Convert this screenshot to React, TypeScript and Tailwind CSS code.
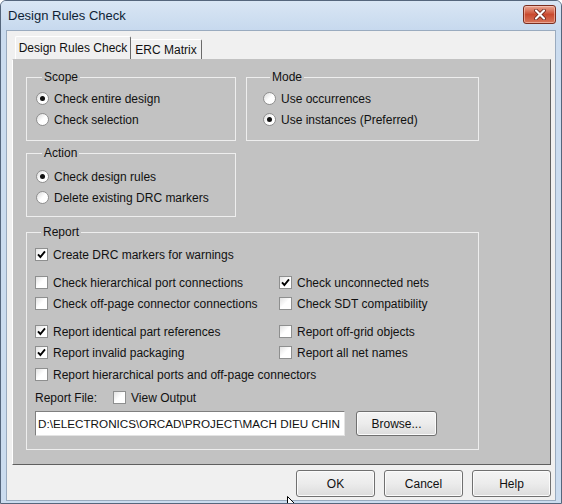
import React from "react";

const Radio = ({ checked }: { checked?: boolean }) => (
  <span className="w-[13px] h-[13px] rounded-full border border-[#8f8f8f] bg-gradient-to-br from-[#d9d9d9] via-white to-white flex items-center justify-center shrink-0">
    {checked && <span className="w-[5px] h-[5px] rounded-full bg-[#111]" />}
  </span>
);

const Check = ({ checked }: { checked?: boolean }) => (
  <span className="w-[13px] h-[13px] border border-[#8e8f8f] bg-gradient-to-br from-[#e2e2e2] via-white to-white flex items-center justify-center shrink-0">
    {checked && (
      <svg width="9" height="9" viewBox="0 0 9 9">
        <path d="M1 4.3 L3.4 7 L8 1.4" stroke="#000" strokeWidth="1.9" fill="none" />
      </svg>
    )}
  </span>
);

const RadioRow = ({ checked, label }: { checked?: boolean; label: string }) => (
  <div className="flex items-center h-[21px] gap-[5px] whitespace-nowrap">
    <Radio checked={checked} />
    <span>{label}</span>
  </div>
);

const CheckRow = ({ checked, label }: { checked?: boolean; label: string }) => (
  <div className="flex items-center h-[21px] gap-[5px] whitespace-nowrap">
    <Check checked={checked} />
    <span>{label}</span>
  </div>
);

const Btn = ({ children, className }: { children: React.ReactNode; className?: string }) => (
  <div
    className={
      "flex items-center justify-center rounded-[3px] border border-[#707070] bg-gradient-to-b from-[#f4f4f4] via-[#ececec] to-[#dcdcdc] shadow-[inset_0_0_0_1px_#fbfbfb] " +
      (className || "")
    }
  >
    {children}
  </div>
);

export default function App() {
  return (
    <div className="relative w-[562px] h-[504px] bg-[#cbdcef] border border-[#55667c] rounded-t-[6px] flex flex-col overflow-hidden font-['Liberation_Sans',Arial,sans-serif] text-[12px] text-[#111]">
      {/* Title bar */}
      <div className="h-[29px] shrink-0 flex justify-between pl-[7px] pr-[5px] bg-gradient-to-b from-[#d9e6f4] to-[#c7d9ee]">
        <span className="text-[13px] leading-[29px] text-[#0f1f36]">Design Rules Check</span>
        <div className="mt-[4px] w-[33px] h-[19px] rounded-[3px] border border-[#7a2e20] bg-gradient-to-b from-[#e9a895] via-[#c94a2f] to-[#d6745a] flex items-center justify-center shadow-[inset_0_0_0_1px_rgba(255,220,210,0.5)]">
          <svg width="12" height="11" viewBox="0 0 12 11">
            <path d="M2 1.5 L10 9.5 M10 1.5 L2 9.5" stroke="#5a1a10" strokeWidth="3.6" strokeLinecap="round" />
            <path d="M2 1.5 L10 9.5 M10 1.5 L2 9.5" stroke="#ffffff" strokeWidth="2.2" strokeLinecap="round" />
          </svg>
        </div>
      </div>

      {/* Client */}
      <div className="mx-[5px] mb-[2px] h-[471px] bg-[#f0f0f0] border border-[#9aabbf] flex flex-col pl-[5px] pr-[4px] pb-[3px]">
        {/* Tabs */}
        <div className="h-[28px] shrink-0 flex items-end pl-[3px]">
          <div className="h-[23px] w-[116px] flex items-center justify-center border-l border-t border-r border-l-white border-t-white border-r-[#6a6a6a] bg-[#f0f0f0] rounded-t-[2px]">
            Design Rules Check
          </div>
          <div className="h-[20px] w-[71px] flex items-center justify-center border-t border-r border-t-white border-r-[#6a6a6a] rounded-tr-[2px]">
            ERC Matrix
          </div>
        </div>

        {/* Panel */}
        <div className="h-[406px] shrink-0 bg-[#c2c2c2] border-l border-t border-r border-b border-l-white border-t-[#c2c2c2] border-r-[#5f5f5f] border-b-[#5f5f5f] flex flex-col pl-[13px] pt-[10px]">
          <div className="flex gap-[10px]">
            <fieldset className="w-[210px] border border-[#eeeeee] pl-[9px] pt-[4px] pb-[10px]">
              <legend className="ml-[6px] px-[2px] leading-[14px]">Scope</legend>
              <RadioRow checked label="Check entire design" />
              <RadioRow label="Check selection" />
            </fieldset>
            <fieldset className="w-[233px] border border-[#eeeeee] pl-[16px] pt-[4px] pb-[10px]">
              <legend className="ml-[7px] px-[2px] leading-[14px]">Mode</legend>
              <RadioRow label="Use occurrences" />
              <RadioRow checked label="Use instances (Preferred)" />
            </fieldset>
          </div>

          <fieldset className="mt-[5px] w-[210px] border border-[#eeeeee] pl-[9px] pt-[6px] pb-[8px]">
            <legend className="ml-[6px] px-[2px] leading-[14px]">Action</legend>
            <RadioRow checked label="Check design rules" />
            <RadioRow label="Delete existing DRC markers" />
          </fieldset>

          <fieldset className="mt-[8px] w-[453px] border border-[#eeeeee] pl-[8px] pt-[5px] pb-[13px]">
            <legend className="ml-[6px] px-[2px] leading-[14px]">Report</legend>
            <CheckRow checked label="Create DRC markers for warnings" />
            <div className="mt-[7px] grid grid-cols-[244px_1fr]">
              <CheckRow label="Check hierarchical port connections" />
              <CheckRow checked label="Check unconnected nets" />
              <CheckRow label="Check off-page connector connections" />
              <CheckRow label="Check SDT compatibility" />
            </div>
            <div className="mt-[7px] grid grid-cols-[244px_1fr]">
              <CheckRow checked label="Report identical part references" />
              <CheckRow label="Report off-grid objects" />
              <CheckRow checked label="Report invalid packaging" />
              <CheckRow label="Report all net names" />
            </div>
            <div className="mt-[1px]">
              <CheckRow label="Report hierarchical ports and off-page connectors" />
            </div>
            <div className="mt-[2px] flex items-center h-[21px]">
              <span className="w-[78px]">Report File:</span>
              <CheckRow label="View Output" />
            </div>
            <div className="mt-[3px] flex gap-[11px]">
              <div className="w-[310px] h-[25px] bg-white border border-t-[#7f7f7f] border-l-[#7f7f7f] border-r-[#e3e3e3] border-b-[#e3e3e3] flex items-center pl-[2px] overflow-hidden whitespace-nowrap text-[11.7px]">
                D:\ELECTRONICS\ORCAD\PROJECT\MACH DIEU CHIN
              </div>
              <Btn className="w-[81px] h-[25px]">Browse...</Btn>
            </div>
          </fieldset>
        </div>

        {/* Buttons */}
        <div className="mt-[5px] flex justify-end gap-[9px]">
          <Btn className="w-[79px] h-[27px] border-[#3c3c3c]">OK</Btn>
          <Btn className="w-[79px] h-[27px]">Cancel</Btn>
          <Btn className="w-[79px] h-[27px]">Help</Btn>
        </div>
      </div>

      {/* Mouse cursor */}
      <svg className="absolute left-[286px] top-[495px]" width="12" height="19" viewBox="0 0 12 19">
        <path d="M0.5 0.5 L0.5 16 L4.2 12.4 L6.8 18 L9 17 L6.5 11.5 L11.5 11.5 Z" fill="#fff" stroke="#000" strokeWidth="1" />
      </svg>
    </div>
  );
}
